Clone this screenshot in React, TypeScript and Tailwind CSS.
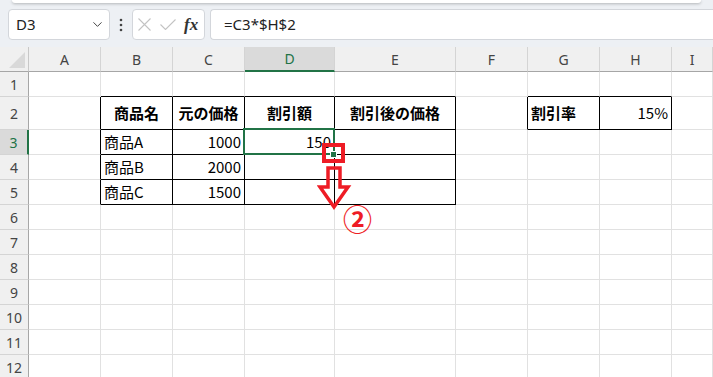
import React from "react";
import { ChevronDown } from "lucide-react";

type Cell = { text: string; bold?: boolean; align: "left" | "center" | "right" };

const cols = ["A", "B", "C", "D", "E", "F", "G", "H", "I"];
const rows = [1, 2, 3, 4, 5, 6, 7, 8, 9, 10, 11, 12];

const data: Record<string, Cell> = {
  B2: { text: "商品名", bold: true, align: "center" },
  C2: { text: "元の価格", bold: true, align: "center" },
  D2: { text: "割引額", bold: true, align: "center" },
  E2: { text: "割引後の価格", bold: true, align: "center" },
  G2: { text: "割引率", bold: true, align: "left" },
  H2: { text: "15%", align: "right" },
  B3: { text: "商品A", align: "left" },
  C3: { text: "1000", align: "right" },
  D3: { text: "150", align: "right" },
  B4: { text: "商品B", align: "left" },
  C4: { text: "2000", align: "right" },
  B5: { text: "商品C", align: "left" },
  C5: { text: "1500", align: "right" },
};

// which grid lines belong to the black table borders
const blackRight = (c: number, r: number) =>
  (r >= 2 && r <= 5 && c <= 4) || (r === 2 && c >= 5 && c <= 7);
const blackBottom = (c: number, r: number) =>
  (r >= 1 && r <= 5 && c >= 1 && c <= 4) || (r >= 1 && r <= 2 && c >= 6 && c <= 7);

const alignClass = {
  left: "justify-start",
  center: "justify-center",
  right: "justify-end",
};

const FormulaBar = () => (
  <div className="h-[47px] bg-[#edf0f4]">
    <div className="mx-[12px] h-[3px] rounded-b-[4px] bg-white shadow-[0_1px_3px_rgba(0,0,0,0.25)]"></div>
    <div className="mt-[6px] flex h-[31px] items-stretch">
      <div className="ml-[8px] flex w-[102px] items-center justify-between rounded-[4px] border border-[#d3d6db] bg-white pl-[7px] pr-[4px] text-[15px] text-[#222]">
        <span>D3</span>
        <ChevronDown className="h-[15px] w-[15px] text-[#444]" strokeWidth={1.6} />
      </div>
      <div className="flex w-[22px] items-center justify-center">
        <svg width="4" height="14" viewBox="0 0 4 14">
          <circle cx="2" cy="2" r="1.3" fill="#444" />
          <circle cx="2" cy="7" r="1.3" fill="#444" />
          <circle cx="2" cy="12" r="1.3" fill="#444" />
        </svg>
      </div>
      <div className="flex w-[73px] items-center rounded-[4px] border border-[#d3d6db] bg-white pl-[5px]">
        <svg width="13" height="13" viewBox="0 0 13 13">
          <path d="M0.5 0.5 12.5 12.5 M12.5 0.5 0.5 12.5" stroke="#c3c3c3" strokeWidth="1.1" fill="none" />
        </svg>
        <svg className="ml-[9px]" width="16" height="11" viewBox="0 0 16 11">
          <path d="M0.5 5.5 5.5 10.5 15.5 0.5" stroke="#c3c3c3" strokeWidth="1.1" fill="none" />
        </svg>
        <span className="ml-[8px] font-['Liberation_Serif',serif] text-[17px] font-bold italic leading-none text-[#333]">
          fx
        </span>
      </div>
      <div className="ml-[5px] flex flex-1 items-center rounded-l-[4px] border border-r-0 border-[#d3d6db] bg-white pl-[13px] text-[15px] text-[#222]">
        =C3*$H$2
      </div>
    </div>
  </div>
);

const Sheet = () => (
  <div className="relative">
    <div className="grid grid-cols-[29px_72px_72px_72px_90px_121px_72px_72px_72px_1fr]">
      {/* column headers */}
      <div className="relative h-[25px] border-r border-b border-r-[#c8c8c8] border-b-[#a6a6a6] bg-[#f0f0f0]">
        <svg className="absolute right-[3px] bottom-[3px]" width="16" height="16" viewBox="0 0 16 16">
          <polygon points="16,0 16,16 0,16" fill="#d9d9d9" />
        </svg>
      </div>
      {cols.map((c) => (
        <div
          key={c}
          className={`flex h-[25px] items-center justify-center border-r border-b border-r-[#d4d4d4] font-['Noto_Sans',sans-serif] text-[14px] ${
            c === "D"
              ? "border-b-2 border-b-[#217346] bg-[#dadada] text-[#217346]"
              : "border-b-[#a6a6a6] bg-[#f0f0f0] text-[#444]"
          }`}
        >
          {c}
        </div>
      ))}

      {rows.map((r) => (
        <React.Fragment key={r}>
          <div
            className={`flex items-center justify-center border-b border-b-[#d4d4d4] font-['Noto_Sans',sans-serif] text-[14px] ${
              r === 2 ? "h-[33px]" : "h-[25px]"
            } ${
              r === 3
                ? "border-r-2 border-r-[#217346] bg-[#dadada] text-[#217346]"
                : "border-r border-r-[#a6a6a6] bg-[#f0f0f0] text-[#444]"
            }`}
          >
            {r}
          </div>
          {cols.map((c, ci) => {
            const cell = data[`${c}${r}`];
            return (
              <div
                key={c}
                className={`flex items-center overflow-visible whitespace-nowrap border-r border-b px-[3px] font-['Noto_Sans_CJK_JP','Noto_Sans',sans-serif] text-[15px] text-black ${
                  r === 2 ? "h-[33px]" : "h-[25px]"
                } ${blackRight(ci, r) ? "border-r-black" : "border-r-[#e1e1e1]"} ${
                  blackBottom(ci, r) ? "border-b-black" : "border-b-[#e1e1e1]"
                } ${cell ? alignClass[cell.align] : ""} ${cell?.bold ? "font-bold" : ""}`}
              >
                {cell?.text}
              </div>
            );
          })}
        </React.Fragment>
      ))}
    </div>

    {/* active cell D3 */}
    <div className="pointer-events-none absolute left-[243px] top-[81px] h-[27px] w-[92px] border-2 border-[#217346]"></div>
    <div className="absolute left-[330px] top-[104px] h-[7px] w-[7px] border border-white bg-[#217346]"></div>

    {/* red annotations */}
    <div className="absolute left-[322px] top-[96px] h-[20px] w-[23px] border-4 border-[#ee1c25]"></div>
    <svg className="absolute left-[317px] top-[117px]" width="36" height="50" viewBox="0 0 36 50">
      <polygon
        points="11,4 23,4 23,23 31,23 17,43 3,23 11,23"
        fill="none"
        stroke="#ee1c25"
        strokeWidth="3.5"
        strokeLinejoin="miter"
      />
    </svg>
    <span className="absolute left-[343px] top-[157px] font-['Noto_Sans_CJK_JP',sans-serif] text-[29px] leading-none font-bold text-[#ee1c25]">
      ②
    </span>
  </div>
);

export default function App() {
  return (
    <div className="h-[377px] w-[713px] overflow-hidden bg-white">
      <FormulaBar />
      <Sheet />
    </div>
  );
}
